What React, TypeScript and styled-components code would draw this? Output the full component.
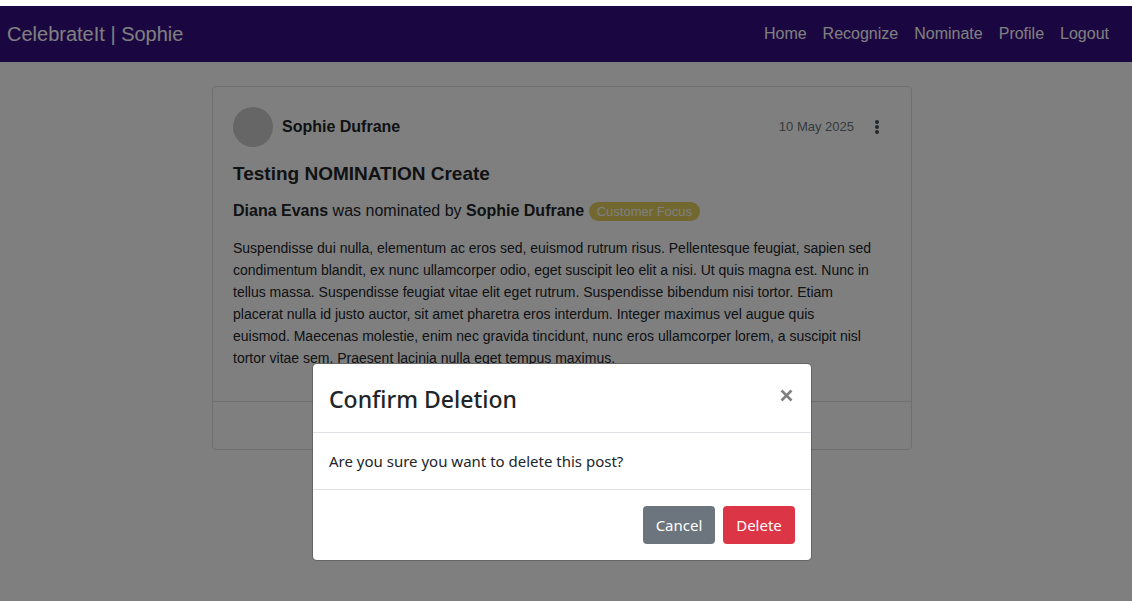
import React from "react";
import styled, { createGlobalStyle } from "styled-components";

const GlobalStyle = createGlobalStyle`
  *, *::before, *::after { box-sizing: border-box; }
  body {
    margin: 0;
    background: #fff;
    color: #212529;
    font: 16px/24px Arial, "Liberation Sans", sans-serif;
  }
`;

const Shell = styled.div`
  display: flex;
  flex-direction: column;
  min-height: 100vh;
  padding-top: 6px;
`;

const Page = styled.div`
  position: relative;
  flex: 1;
  background: #fff;
`;

const NavBar = styled.nav`
  display: flex;
  align-items: center;
  justify-content: space-between;
  height: 56px;
  padding: 0 15px 0 7px;
  background: #350c80;
`;

const Brand = styled.a`
  color: #fff;
  font-size: 20px;
  line-height: 30px;
  text-decoration: none;
`;

const NavLinks = styled.div`
  display: flex;
`;

const NavLink = styled.a`
  padding: 8px;
  color: #fff;
  text-decoration: none;
`;

const Main = styled.main`
  padding: 24px 8px 24px 0;
`;

const Card = styled.article`
  width: 100%;
  max-width: 700px;
  margin: 0 auto;
  border: 1px solid #dfdfdf;
  border-radius: 4px;
`;

const CardBody = styled.div`
  padding: 20px 20px 32px;
`;

const CardFooter = styled.footer`
  height: 48px;
  border-top: 1px solid #dfdfdf;
`;

const PostHeader = styled.header`
  display: flex;
  align-items: center;
  gap: 9px;
  margin-bottom: 15px;
`;

const Avatar = styled.div`
  width: 40px;
  height: 40px;
  border-radius: 50%;
  background: #ccc;
`;

const Author = styled.strong`
  flex: 1;
`;

const PostDate = styled.time`
  color: #6c757d;
  font-size: 13px;
`;

const MenuButton = styled.button`
  display: flex;
  padding: 4px 9px;
  border: 0;
  background: none;
  color: #495057;
`;

const PostTitle = styled.h1`
  margin: 0 0 13px;
  font-size: 19px;
  line-height: 24px;
`;

const Summary = styled.p`
  margin: 0 0 14px;
`;

const Badge = styled.span`
  display: inline-block;
  padding: 0 8px;
  border-radius: 10px;
  background: #e2ce5e;
  color: #fff;
  font-size: 13px;
  line-height: 19px;
`;

const PostText = styled.p`
  margin: 0;
  font-size: 14px;
  line-height: 22px;
`;

const Backdrop = styled.div`
  position: absolute;
  inset: 0;
  padding: 357px 8px 0 0;
  background: rgba(0, 0, 0, 0.5);
`;

const Dialog = styled.section`
  width: 100%;
  max-width: 500px;
  margin: 0 auto;
  border: 1px solid rgba(0, 0, 0, 0.2);
  border-radius: 5px;
  background: #fff;
  background-clip: padding-box;
  font-family: "Segoe UI", "Noto Sans", sans-serif;
  font-size: 15px;
`;

const DialogHeader = styled.header`
  display: flex;
  align-items: flex-start;
  justify-content: space-between;
  padding: 16px 16px 14px;
  border-bottom: 1px solid #dee2e6;
`;

const DialogTitle = styled.h2`
  margin: 0;
  font-size: 23px;
  font-weight: 500;
  line-height: 38px;
`;

const CloseButton = styled.button`
  display: flex;
  padding: 9px 2px;
  border: 0;
  background: none;
  color: #7f7f7f;
`;

const DialogBody = styled.p`
  margin: 0;
  padding: 16px;
`;

const DialogFooter = styled.footer`
  display: flex;
  justify-content: flex-end;
  gap: 8px;
  padding: 16px;
  border-top: 1px solid #dee2e6;
`;

const ActionButton = styled.button<{ $color: string }>`
  min-width: 72px;
  height: 38px;
  padding: 0 12px;
  border: 0;
  border-radius: 4px;
  background: ${({ $color }) => $color};
  color: #fff;
  font-family: inherit;
  font-size: 15px;
  line-height: 24px;
`;

const links = ["Home", "Recognize", "Nominate", "Profile", "Logout"];

export default function App() {
  return (
    <Shell>
      <GlobalStyle />
      <Page>
        <NavBar>
          <Brand href="#">CelebrateIt | Sophie</Brand>
          <NavLinks>
            {links.map((label) => (
              <NavLink key={label} href="#">
                {label}
              </NavLink>
            ))}
          </NavLinks>
        </NavBar>
        <Main>
          <Card>
            <CardBody>
              <PostHeader>
                <Avatar />
                <Author>Sophie Dufrane</Author>
                <PostDate dateTime="2025-05-10">10 May 2025</PostDate>
                <MenuButton aria-label="Post options">
                  <svg width="10" height="14" viewBox="0 0 10 14" fill="currentColor">
                    <circle cx="5" cy="2" r="2" />
                    <circle cx="5" cy="7" r="2" />
                    <circle cx="5" cy="12" r="2" />
                  </svg>
                </MenuButton>
              </PostHeader>
              <PostTitle>Testing NOMINATION Create</PostTitle>
              <Summary>
                <strong>Diana Evans</strong> was nominated by <strong>Sophie Dufrane</strong>{" "}
                <Badge>Customer Focus</Badge>
              </Summary>
              <PostText>
                Suspendisse dui nulla, elementum ac eros sed, euismod rutrum risus. Pellentesque feugiat, sapien sed
                <br />
                condimentum blandit, ex nunc ullamcorper odio, eget suscipit leo elit a nisi. Ut quis magna est. Nunc in
                <br />
                tellus massa. Suspendisse feugiat vitae elit eget rutrum. Suspendisse bibendum nisi tortor. Etiam
                <br />
                placerat nulla id justo auctor, sit amet pharetra eros interdum. Integer maximus vel augue quis
                <br />
                euismod. Maecenas molestie, enim nec gravida tincidunt, nunc eros ullamcorper lorem, a suscipit nisl
                <br />
                tortor vitae sem. Praesent lacinia nulla eget tempus maximus.
              </PostText>
            </CardBody>
            <CardFooter />
          </Card>
        </Main>
        <Backdrop>
          <Dialog role="dialog" aria-modal="true" aria-labelledby="dialog-title">
            <DialogHeader>
              <DialogTitle id="dialog-title">Confirm Deletion</DialogTitle>
              <CloseButton aria-label="Close">
                <svg width="13" height="13" viewBox="0 0 13 13" fill="none" stroke="currentColor" strokeWidth="2.6">
                  <path d="M1.5 1.5l10 10M11.5 1.5l-10 10" />
                </svg>
              </CloseButton>
            </DialogHeader>
            <DialogBody>Are you sure you want to delete this post?</DialogBody>
            <DialogFooter>
              <ActionButton $color="#6c757d">Cancel</ActionButton>
              <ActionButton $color="#dc3545">Delete</ActionButton>
            </DialogFooter>
          </Dialog>
        </Backdrop>
      </Page>
    </Shell>
  );
}
